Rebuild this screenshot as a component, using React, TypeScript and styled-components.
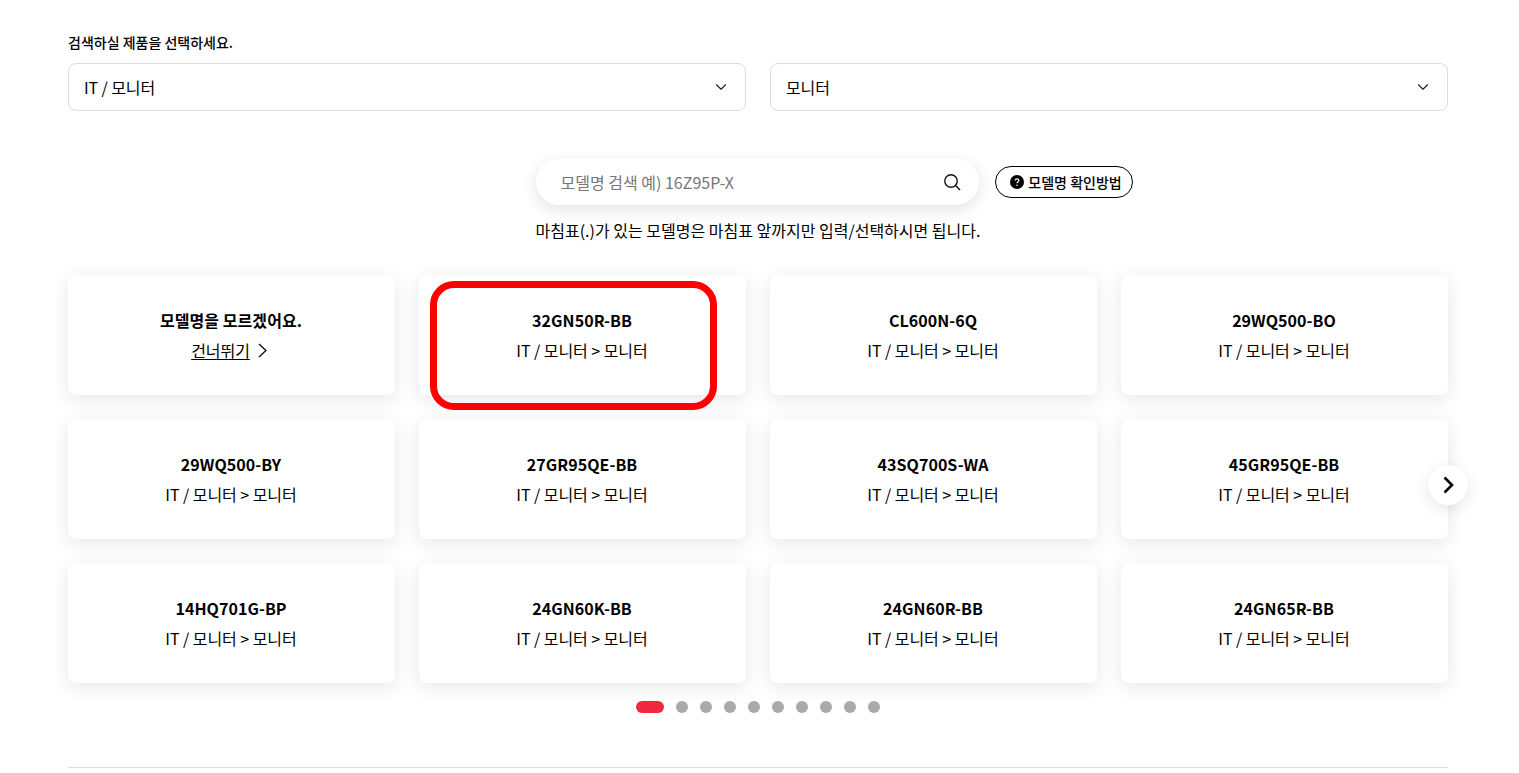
import React from 'react';
import styled, { createGlobalStyle } from 'styled-components';
import { ChevronDown } from 'lucide-react';

const GlobalStyle = createGlobalStyle`
  html, body {
    margin: 0;
    height: 773px;
    overflow: hidden;
    background: #fff;
    color: #000;
    font-family: "Noto Sans CJK KR", "Noto Sans", sans-serif;
  }
`;

const Page = styled.div`
  width: 1380px;
  margin-left: 68px;
  padding-top: 32px;
  position: relative;
`;

const Label = styled.div`
  font-size: 14px;
  font-weight: 500;
  line-height: 20px;
`;

const SelectRow = styled.div`
  display: grid;
  grid-template-columns: 1fr 1fr;
  gap: 24px;
  margin-top: 11px;
`;

const Select = styled.div`
  height: 48px;
  box-sizing: border-box;
  border: 1px solid #ddd;
  border-radius: 8px;
  padding: 0 15px;
  display: flex;
  align-items: center;
  justify-content: space-between;
  font-size: 16px;
  letter-spacing: -0.1px;
`;

const SearchRow = styled.div`
  display: grid;
  grid-template-columns: 1fr 443px 1fr;
  align-items: center;
  margin-top: 48px;
  padding-right: 2px;
`;

const SearchBox = styled.div`
  grid-column: 2;
  height: 46px;
  box-sizing: border-box;
  border-radius: 23px;
  padding: 0 17px 0 25px;
  display: flex;
  align-items: center;
  justify-content: space-between;
  background: #fff;
  box-shadow: 0 4px 16px rgba(0, 0, 0, 0.12);
  font-size: 16px;
  color: #777;
`;

const HelpButton = styled.div`
  justify-self: start;
  margin-left: 16px;
  width: 138px;
  height: 32px;
  box-sizing: border-box;
  border: 1px solid #000;
  border-radius: 16px;
  padding-left: 5px;
  display: flex;
  align-items: center;
  justify-content: center;
  gap: 4px;
  font-size: 14px;
  font-weight: 500;
`;

const Note = styled.p`
  margin: 13px 0 0;
  text-align: center;
  font-size: 16px;
  line-height: 24px;
`;

const Carousel = styled.div`
  position: relative;
  margin-top: 33px;
`;

const ClipArea = styled.div`
  margin: -12px -12px 0;
  padding: 12px 12px 18px;
  overflow: hidden;
`;

const CardGrid = styled.div`
  display: grid;
  grid-template-columns: repeat(4, 327px);
  grid-auto-rows: 120px;
  gap: 24px;
`;

const Card = styled.div`
  background: #fff;
  border-radius: 8px;
  box-shadow: 0 4px 20px rgba(0, 0, 0, 0.1);
  display: flex;
  flex-direction: column;
  align-items: center;
  padding: 32px 1px 0 0;
  box-sizing: border-box;
`;

const CardTitle = styled.div`
  font-size: 16px;
  font-weight: 700;
  line-height: 26px;
  letter-spacing: 0.05px;
`;

const CardSub = styled.div`
  margin-top: 4px;
  font-size: 16px;
  line-height: 26px;
  letter-spacing: -0.05px;
  display: flex;
  align-items: center;
  gap: 8px;
`;

const SkipLink = styled.span`
  text-decoration: underline;
  text-underline-offset: 2px;
`;

const SkipArrow = styled.svg`
  margin-right: 4px;
`;

const Highlight = styled.div`
  position: absolute;
  left: 362px;
  top: 18px;
  width: 287px;
  height: 129px;
  box-sizing: border-box;
  border: 7px solid #ff0000;
  border-radius: 24px;
  pointer-events: none;
`;

const NextButton = styled.div`
  position: absolute;
  right: -20px;
  top: 202px;
  width: 40px;
  height: 40px;
  border-radius: 50%;
  background: #fff;
  box-shadow: 0 4px 16px rgba(0, 0, 0, 0.1);
  display: flex;
  align-items: center;
  justify-content: center;
`;

const Dots = styled.div`
  display: flex;
  justify-content: center;
  gap: 12px;
`;

const Dot = styled.span<{ $active?: boolean }>`
  width: ${(p) => (p.$active ? '28px' : '12px')};
  height: 12px;
  border-radius: 6px;
  background: ${(p) => (p.$active ? '#f0273f' : '#a9a9a9')};
`;

const Divider = styled.hr`
  border: 0;
  border-top: 1px solid #ddd;
  margin: 54px 0 0;
`;

const products = [
  '32GN50R-BB', 'CL600N-6Q', '29WQ500-BO',
  '29WQ500-BY', '27GR95QE-BB', '43SQ700S-WA', '45GR95QE-BB',
  '14HQ701G-BP', '24GN60K-BB', '24GN60R-BB', '24GN65R-BB',
];

const App: React.FC = () => (
  <>
    <GlobalStyle />
    <Page>
      <Label>검색하실 제품을 선택하세요.</Label>
      <SelectRow>
        <Select>
          IT / 모니터
          <ChevronDown size={18} strokeWidth={1.5} color="#222" />
        </Select>
        <Select>
          모니터
          <ChevronDown size={18} strokeWidth={1.5} color="#222" />
        </Select>
      </SelectRow>
      <SearchRow>
        <SearchBox>
          모델명 검색 예) 16Z95P-X
          <svg width="20" height="20" viewBox="0 0 20 20" fill="none" stroke="#111" strokeWidth="1.4">
            <circle cx="9" cy="9" r="6.2" />
            <path d="M13.6 13.6L18 18" />
          </svg>
        </SearchBox>
        <HelpButton>
          <svg width="14" height="14" viewBox="0 0 14 14">
            <circle cx="7" cy="7" r="7" fill="#000" />
            <path d="M5.2 5.6C5.2 4.5 6 3.8 7 3.8s1.8.7 1.8 1.6c0 1.3-1.8 1.4-1.8 2.9" fill="none" stroke="#fff" strokeWidth="1.2" />
            <circle cx="7" cy="10.2" r="0.8" fill="#fff" />
          </svg>
          모델명 확인방법
        </HelpButton>
      </SearchRow>
      <Note>마침표(.)가 있는 모델명은 마침표 앞까지만 입력/선택하시면 됩니다.</Note>
      <Carousel>
        <ClipArea>
          <CardGrid>
            <Card>
              <CardTitle>모델명을 모르겠어요.</CardTitle>
              <CardSub>
                <SkipLink>건너뛰기</SkipLink>
                <SkipArrow width="9" height="15" viewBox="0 0 9 15" fill="none" stroke="#000" strokeWidth="1.2">
                  <path d="M1 1l7 6.5-7 6.5" />
                </SkipArrow>
              </CardSub>
            </Card>
            {products.map((name) => (
              <Card key={name}>
                <CardTitle>{name}</CardTitle>
                <CardSub>IT / 모니터 &gt; 모니터</CardSub>
              </Card>
            ))}
          </CardGrid>
        </ClipArea>
        <Highlight />
        <NextButton>
          <svg width="12" height="18" viewBox="0 0 12 18" fill="none" stroke="#000" strokeWidth="2.6">
            <path d="M2.5 1.5L10 9L2.5 16.5" />
          </svg>
        </NextButton>
        <Dots>
          <Dot $active />
          {Array.from({ length: 9 }, (_, i) => <Dot key={i} />)}
        </Dots>
      </Carousel>
      <Divider />
    </Page>
  </>
);

export default App;
